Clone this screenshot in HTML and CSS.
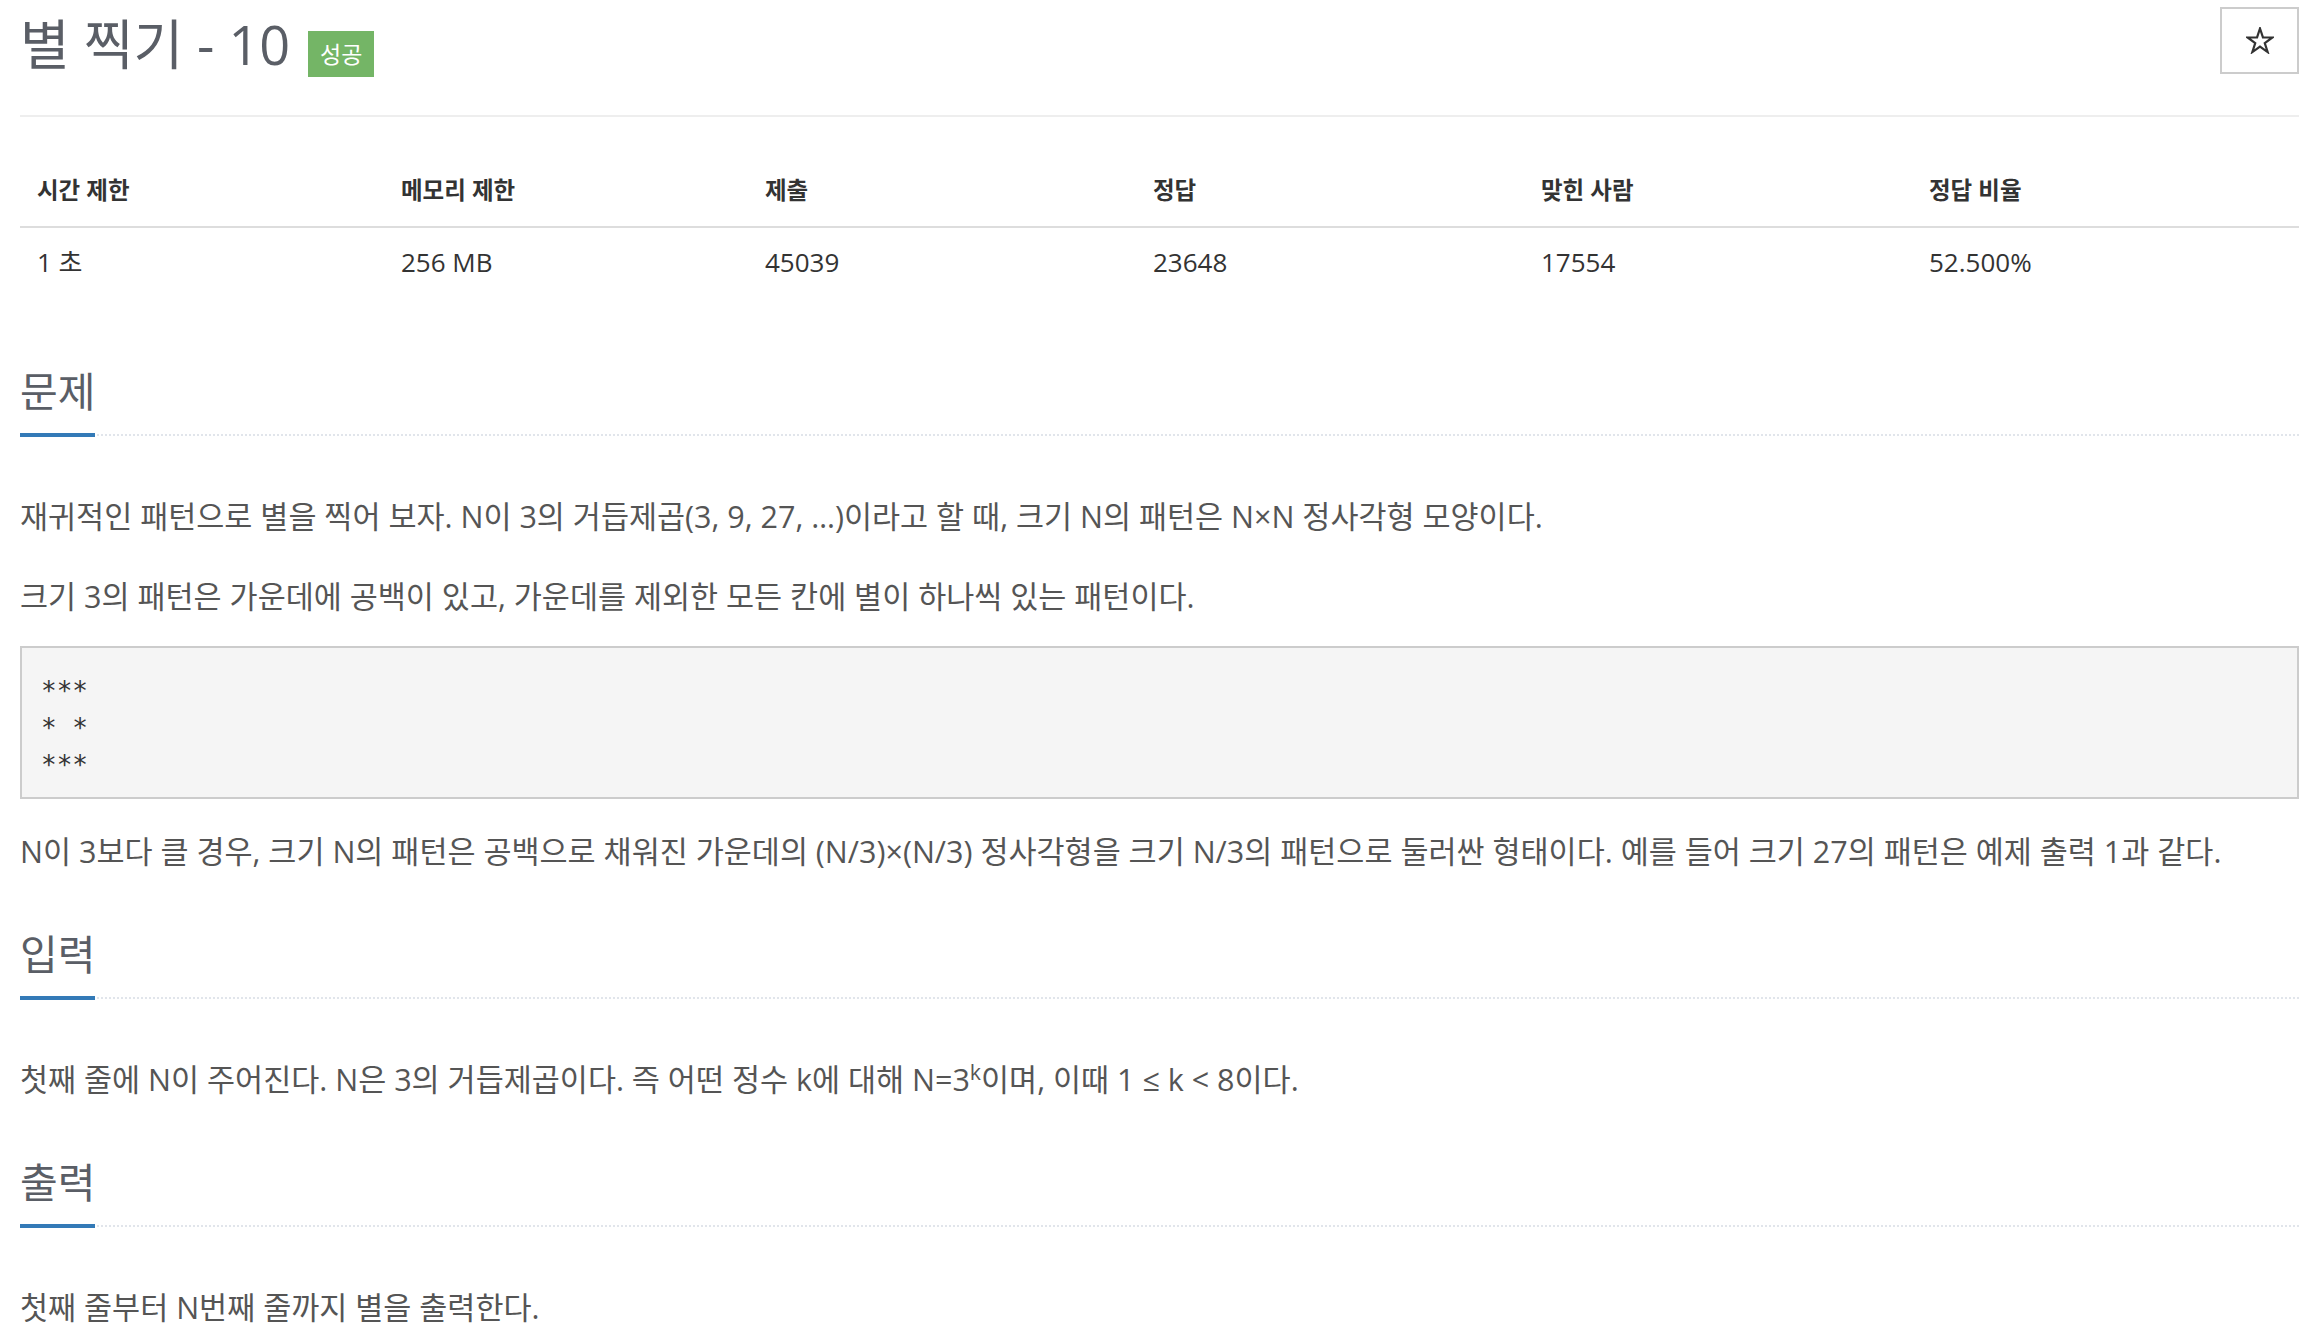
FILE: index.html
```html
<!DOCTYPE html>
<html lang="ko">
<head>
<meta charset="utf-8">
<title>별 찍기 - 10</title>
<link rel="stylesheet" href="styles.css">
</head>
<body>
<div class="page">
  <header class="page-header">
    <h1 class="title"><span class="title-text">별 찍기 - 10</span><span class="badge">성공</span></h1>
    <button class="star-btn" type="button" aria-label="즐겨찾기">
      <svg class="star-icon" width="28" height="27" viewBox="0 0 28 27" aria-hidden="true">
        <polygon points="14,1.5 16.94,10.45 26.36,10.48 18.76,16.05 21.64,25.02 14,19.5 6.36,25.02 9.24,16.05 1.64,10.48 11.06,10.45" fill="none" stroke="#333" stroke-width="2.2" stroke-linejoin="miter"/>
      </svg>
    </button>
  </header>

  <table class="info">
    <colgroup>
      <col class="c-narrow"><col class="c-narrow"><col class="c-wide"><col class="c-wide"><col class="c-wide"><col>
    </colgroup>
    <thead>
      <tr><th>시간 제한</th><th>메모리 제한</th><th>제출</th><th>정답</th><th>맞힌 사람</th><th>정답 비율</th></tr>
    </thead>
    <tbody>
      <tr><td>1 초</td><td>256 MB</td><td>45039</td><td>23648</td><td>17554</td><td>52.500%</td></tr>
    </tbody>
  </table>

  <section class="sec sec-first">
    <div class="headline"><h2>문제</h2></div>
    <div class="problem-text">
      <p>재귀적인 패턴으로 별을 찍어 보자. N이 3의 거듭제곱(3, 9, 27, …)이라고 할 때, 크기 N의 패턴은 N×N 정사각형 모양이다.</p>
      <p class="p-gap">크기 3의 패턴은 가운데에 공백이 있고, 가운데를 제외한 모든 칸에 별이 하나씩 있는 패턴이다.</p>
<pre class="sample">***
* *
***</pre>
      <p class="p-after">N이 3보다 클 경우, 크기 N의 패턴은 공백으로 채워진 가운데의 (N/3)×(N/3) 정사각형을 크기 N/3의 패턴으로 둘러싼 형태이다. 예를 들어 크기 27의 패턴은 예제 출력 1과 같다.</p>
    </div>
  </section>

  <section class="sec">
    <div class="headline"><h2>입력</h2></div>
    <div class="problem-text">
      <p>첫째 줄에 N이 주어진다. N은 3의 거듭제곱이다. 즉 어떤 정수 k에 대해 N=3<sup>k</sup>이며, 이때 1 ≤ k &lt; 8이다.</p>
    </div>
  </section>

  <section class="sec">
    <div class="headline"><h2>출력</h2></div>
    <div class="problem-text">
      <p>첫째 줄부터 N번째 줄까지 별을 출력한다.</p>
    </div>
  </section>
</div>
</body>
</html>
```

FILE: styles.css
```css
html, body {
  margin: 0;
  padding: 0;
  background: #fff;
}

body {
  font-family: "Open Sans", "Noto Sans CJK KR", sans-serif;
  color: #333;
}

.page {
  display: flex;
  flex-direction: column;
  padding: 7px 13px 40px 20px;
}

/* ---------- header ---------- */
.page-header {
  display: flex;
  justify-content: space-between;
  align-items: flex-start;
  padding-bottom: 38px;
  border-bottom: 2px solid #eee;
}

.title {
  display: flex;
  align-items: flex-end;
  margin: 4px 0 0;
  font-weight: 400;
}

.title-text {
  font-size: 54px;
  line-height: 66px;
  color: #5a5e66;
}

.badge {
  display: flex;
  align-items: center;
  justify-content: center;
  width: 66px;
  height: 46px;
  margin-left: 18px;
  background: #74b566;
  color: #fff;
  font-size: 23px;
  line-height: 1;
}

.star-btn {
  display: flex;
  align-items: center;
  justify-content: center;
  width: 79px;
  height: 67px;
  padding: 0;
  background: #fff;
  border: 2px solid #ccc;
  border-radius: 0;
}

/* ---------- info table ---------- */
.info {
  width: 100%;
  margin-top: 37px;
  border-collapse: collapse;
  table-layout: fixed;
  font-size: 26px;
  color: #333;
}

.c-narrow { width: 364px; }
.c-wide { width: 388px; }

.info th {
  padding: 16px 17px;
  line-height: 40px;
  text-align: left;
  font-size: 23.5px;
  font-weight: 700;
  border-bottom: 2px solid #ddd;
}

.info td {
  padding: 14px 17px 18px;
  line-height: 40px;
}

/* ---------- sections ---------- */
.sec {
  display: flex;
  flex-direction: column;
  margin-top: 52px;
}

.sec-first {
  margin-top: 69px;
}

.headline {
  border-bottom: 2px dotted #e1e5eb;
}

.headline h2 {
  display: inline-block;
  margin: 0 0 -3px;
  padding-bottom: 20px;
  border-bottom: 4px solid #337ab7;
  font-size: 41px;
  font-weight: 400;
  line-height: 44px;
  color: #5a5e66;
}

.problem-text {
  display: flex;
  flex-direction: column;
  margin-top: 51px;
  font-size: 30.5px;
  line-height: 58px;
  color: #555;
}

.problem-text p {
  margin: 0;
}

.problem-text .p-gap {
  margin-top: 22px;
}

.problem-text .p-after {
  margin-top: 23px;
}

.problem-text sup {
  font-size: 70%;
  line-height: 0;
  position: relative;
  top: -0.55em;
  vertical-align: baseline;
}

.sample {
  margin: 21px 0 0;
  padding: 25px 19px 13px;
  border: 2px solid #ccc;
  background: #f5f5f5;
  font-family: "DejaVu Sans Mono", monospace;
  font-size: 26px;
  line-height: 37.14px;
  color: #333;
}
```
